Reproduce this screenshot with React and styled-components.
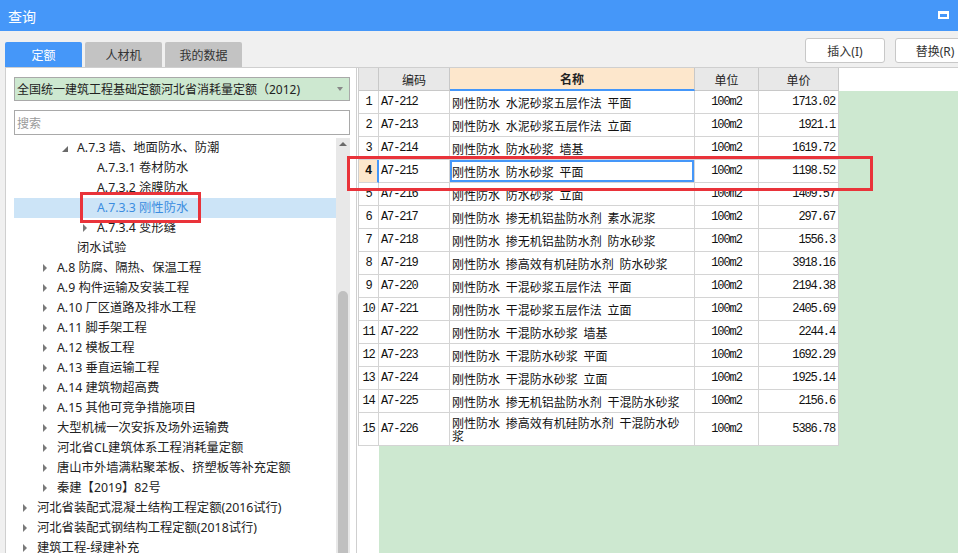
import React from 'react'
import styled, { createGlobalStyle, css } from 'styled-components'

const Global = createGlobalStyle`
  html, body { margin: 0; padding: 0; background: #f0f0f0; overflow: hidden; }
  * { box-sizing: border-box; }
`

const UI_FONT = `"Noto Sans", "Noto Sans CJK SC", sans-serif`
const CJK_FONT = `"Noto Sans CJK SC", sans-serif`
const BLUE = '#4597f9'
const GREEN = '#cde8d0'

const Window = styled.div`
  width: 958px;
  height: 553px;
  display: flex;
  flex-direction: column;
  position: relative;
  overflow: hidden;
  font-family: ${UI_FONT};
  color: #333;
`
const TitleBar = styled.div`
  height: 31px;
  flex: none;
  background: ${BLUE};
  display: flex;
  align-items: center;
  justify-content: space-between;
  padding: 0 8px 0 8px;
  color: #fff;
  font-family: ${CJK_FONT};
  font-size: 14px;
`
const MaxIcon = styled.span`
  width: 11px;
  height: 8px;
  border: 2px solid #fff;
  border-top-width: 3px;
  margin-right: 1px;
  margin-top: -1px;
`
const Toolbar = styled.div`
  height: 36px;
  flex: none;
  display: flex;
  justify-content: space-between;
  padding-left: 5px;
  overflow: hidden;
`
const Tabs = styled.div`
  display: flex;
  align-items: flex-end;
  gap: 3px;
`
const Tab = styled.div`
  width: 77px;
  height: 25px;
  border-radius: 2px 2px 0 0;
  display: flex;
  align-items: center;
  justify-content: center;
  font-family: ${CJK_FONT};
  font-size: 12px;
  background: ${p => (p.$active ? BLUE : '#c3c3c3')};
  color: ${p => (p.$active ? '#fff' : '#333')};
`
const Buttons = styled.div`
  display: flex;
  gap: 10px;
  padding-top: 7px;
  margin-right: -17px;
`
const Button = styled.div`
  width: 80px;
  height: 25px;
  border: 1px solid #c8c8c8;
  border-radius: 3px;
  background: #fff;
  display: flex;
  align-items: center;
  justify-content: center;
  font-size: 12px;
  color: #333;
`
const Content = styled.div`
  flex: 1;
  display: flex;
  min-height: 0;
  padding-left: 5px;
`
const LeftPanel = styled.div`
  width: 351px;
  flex: none;
  background: #fff;
  border-left: 1px solid #cfcfcf;
  border-top: 1px solid #cfcfcf;
  padding: 9px 5px 0 8px;
  display: flex;
  flex-direction: column;
  min-height: 0;
`
const Select = styled.div`
  height: 24px;
  width: 336px;
  background: ${GREEN};
  border: 1px solid #a9a9a9;
  display: flex;
  align-items: center;
  justify-content: space-between;
  padding: 0 6px 0 2px;
  font-size: 12px;
  color: #222;
`
const Caret = styled.span`
  width: 0;
  height: 0;
  border-left: 3.5px solid transparent;
  border-right: 3.5px solid transparent;
  border-top: 4px solid #888;
`
const Search = styled.div`
  height: 25px;
  width: 336px;
  margin-top: 9px;
  border: 1px solid #a9a9a9;
  display: flex;
  align-items: center;
  padding-left: 2px;
  font-family: ${CJK_FONT};
  font-size: 12px;
  color: #9a9a9a;
`
const TreeArea = styled.div`
  flex: 1;
  display: flex;
  margin-top: 3px;
  min-height: 0;
  width: 336px;
`
const TreeList = styled.div`
  width: 322px;
  flex: none;
`
const TreeRow = styled.div`
  height: 20px;
  display: flex;
  align-items: center;
  padding-left: ${p => 8 + p.$level * 20}px;
  font-size: 12.3px;
  line-height: 20px;
  white-space: nowrap;
  background: ${p => (p.$selected ? '#cce4f7' : 'transparent')};
  color: ${p => (p.$selected ? '#3b8de0' : '#222')};
`
const Arrow = styled.span`
  width: 15px;
  flex: none;
  display: flex;
  align-items: center;
  ${p => p.$kind === 'closed' && css`
    &::before {
      content: '';
      border-top: 4px solid transparent;
      border-bottom: 4px solid transparent;
      border-left: 4px solid #7a7a7a;
      margin-left: 1px;
    }
  `}
  ${p => p.$kind === 'open' && css`
    &::before {
      content: '';
      border-left: 6px solid transparent;
      border-bottom: 6px solid #6a6a6a;
      margin-top: 2px;
    }
  `}
`
const ScrollTrack = styled.div`
  width: 14px;
  flex: none;
  background: #e8e8e8;
  display: flex;
  flex-direction: column;
  align-items: center;
`
const UpArrow = styled.span`
  margin-top: 4px;
  border-left: 4px solid transparent;
  border-right: 4px solid transparent;
  border-bottom: 4px solid #6a6a6a;
`
const Thumb = styled.div`
  width: 10px;
  flex: 1;
  margin-top: 145px;
  background: #c0c0c0;
  border-radius: 5px 5px 0 0;
`

const TablePane = styled.div`
  flex: 1;
  border-left: 1px solid #cfcfcf;
  border-top: 1px solid #cfcfcf;
  padding-left: 1px;
  background:
    linear-gradient(to bottom, #fff 23px, transparent 23px),
    linear-gradient(to right, #fff 22px, ${GREEN} 22px);
`
const Grid = styled.div`
  display: grid;
  grid-template-columns: 20px 71px 245px 64px 80px;
  width: 481px;
  border-left: 1px solid #cfcfcf;
  background: #fff;
`
const Cell = styled.div`
  border-right: 1px solid #d4d4d4;
  border-bottom: 1px solid #d4d4d4;
  height: ${p => (p.$tall ? 33 : 23)}px;
  display: flex;
  align-items: center;
  font-size: 12px;
  overflow: hidden;
  white-space: nowrap;
  color: #111;
  justify-content: ${p => p.$align || 'flex-start'};
  padding: 0 ${p => (p.$align === 'flex-end' ? 3 : 0)}px 0 ${p => (p.$align ? 0 : 2)}px;
`
const HeadCell = styled(Cell)`
  height: 23px;
  justify-content: center;
  padding: 0;
  font-family: ${CJK_FONT};
  font-size: 12px;
  color: #222;
  background: ${p => (p.$active ? '#fde7cc' : '#e8e8e8')};
  font-weight: ${p => (p.$active ? 700 : 400)};
  border-right-color: #c8c8c8;
  border-bottom: ${p => (p.$active ? `2px solid ${BLUE}` : '1px solid #c8c8c8')};
`
const NumCell = styled(Cell)`
  justify-content: center;
  padding: 0;
  background: ${p => (p.$selected ? '#fde7cc' : '#fff')};
  border-right-color: ${p => (p.$selected ? BLUE : '#d4d4d4')};
  border-right-width: ${p => (p.$selected ? 2 : 1)}px;
  font-weight: ${p => (p.$selected ? 700 : 400)};
`
const NameCell = styled(Cell)`
  font-family: ${CJK_FONT};
  word-spacing: 3px;
  white-space: pre-line;
  line-height: 13px;
  ${p => p.$selected && css`box-shadow: inset 0 0 0 2px ${BLUE};`}
`
const Mono = styled.span`
  font-family: "Liberation Mono", "DejaVu Sans Mono", monospace;
  font-size: 12px;
  letter-spacing: -1.1px;
`

const Mark = styled.div`
  position: absolute;
  border: 3px solid #e9333a;
  pointer-events: none;
`

const tree = [
  { level: 2, arrow: 'open', text: 'A.7.3 墙、地面防水、防潮' },
  { level: 3, text: 'A.7.3.1 卷材防水' },
  { level: 3, text: 'A.7.3.2 涂膜防水' },
  { level: 3, text: 'A.7.3.3 刚性防水', selected: true },
  { level: 3, arrow: 'closed', text: 'A.7.3.4 变形缝' },
  { level: 2, text: '闭水试验' },
  { level: 1, arrow: 'closed', text: 'A.8 防腐、隔热、保温工程' },
  { level: 1, arrow: 'closed', text: 'A.9 构件运输及安装工程' },
  { level: 1, arrow: 'closed', text: 'A.10 厂区道路及排水工程' },
  { level: 1, arrow: 'closed', text: 'A.11 脚手架工程' },
  { level: 1, arrow: 'closed', text: 'A.12 模板工程' },
  { level: 1, arrow: 'closed', text: 'A.13 垂直运输工程' },
  { level: 1, arrow: 'closed', text: 'A.14 建筑物超高费' },
  { level: 1, arrow: 'closed', text: 'A.15 其他可竞争措施项目' },
  { level: 1, arrow: 'closed', text: '大型机械一次安拆及场外运输费' },
  { level: 1, arrow: 'closed', text: '河北省CL建筑体系工程消耗量定额' },
  { level: 1, arrow: 'closed', text: '唐山市外墙满粘聚苯板、挤塑板等补充定额' },
  { level: 1, arrow: 'closed', text: '秦建【2019】82号' },
  { level: 0, arrow: 'closed', text: '河北省装配式混凝土结构工程定额(2016试行)' },
  { level: 0, arrow: 'closed', text: '河北省装配式钢结构工程定额(2018试行)' },
  { level: 0, arrow: 'closed', text: '建筑工程-绿建补充' },
]

const rows = [
  ['A7-212', '刚性防水 水泥砂浆五层作法 平面', '1713.02'],
  ['A7-213', '刚性防水 水泥砂浆五层作法 立面', '1921.1'],
  ['A7-214', '刚性防水 防水砂浆 墙基', '1619.72'],
  ['A7-215', '刚性防水 防水砂浆 平面', '1198.52'],
  ['A7-216', '刚性防水 防水砂浆 立面', '1409.57'],
  ['A7-217', '刚性防水 掺无机铝盐防水剂 素水泥浆', '297.67'],
  ['A7-218', '刚性防水 掺无机铝盐防水剂 防水砂浆', '1556.3'],
  ['A7-219', '刚性防水 掺高效有机硅防水剂 防水砂浆', '3918.16'],
  ['A7-220', '刚性防水 干混砂浆五层作法 平面', '2194.38'],
  ['A7-221', '刚性防水 干混砂浆五层作法 立面', '2405.69'],
  ['A7-222', '刚性防水 干混防水砂浆 墙基', '2244.4'],
  ['A7-223', '刚性防水 干混防水砂浆 平面', '1692.29'],
  ['A7-224', '刚性防水 干混防水砂浆 立面', '1925.14'],
  ['A7-225', '刚性防水 掺无机铝盐防水剂 干混防水砂浆', '2156.6'],
  ['A7-226', '刚性防水 掺高效有机硅防水剂 干混防水砂\n浆', '5386.78'],
]

const App = () => {
  return (
    <Window>
      <Global />
      <TitleBar>
        <span>查询</span>
        <MaxIcon />
      </TitleBar>
      <Toolbar>
        <Tabs>
          <Tab $active>定额</Tab>
          <Tab>人材机</Tab>
          <Tab>我的数据</Tab>
        </Tabs>
        <Buttons>
          <Button>插入(I)</Button>
          <Button>替换(R)</Button>
        </Buttons>
      </Toolbar>
      <Content>
        <LeftPanel>
          <Select>
            <span>全国统一建筑工程基础定额河北省消耗量定额（2012)</span>
            <Caret />
          </Select>
          <Search>搜索</Search>
          <TreeArea>
            <TreeList>
              {tree.map((n, i) => (
                <TreeRow key={i} $level={n.level} $selected={n.selected}>
                  <Arrow $kind={n.arrow} />
                  <span>{n.text}</span>
                </TreeRow>
              ))}
            </TreeList>
            <ScrollTrack>
              <UpArrow />
              <Thumb />
            </ScrollTrack>
          </TreeArea>
        </LeftPanel>
        <TablePane>
          <Grid>
            <HeadCell />
            <HeadCell>编码</HeadCell>
            <HeadCell $active>名称</HeadCell>
            <HeadCell>单位</HeadCell>
            <HeadCell>单价</HeadCell>
            {rows.map(([code, name, price], i) => {
              const sel = i === 3
              const tall = i === 14
              return (
                <React.Fragment key={code}>
                  <NumCell $selected={sel} $tall={tall}><Mono>{i + 1}</Mono></NumCell>
                  <Cell $tall={tall}><Mono>{code}</Mono></Cell>
                  <NameCell $selected={sel} $tall={tall}>{name}</NameCell>
                  <Cell $align="center" $tall={tall}><Mono>100m2</Mono></Cell>
                  <Cell $align="flex-end" $tall={tall}><Mono>{price}</Mono></Cell>
                </React.Fragment>
              )
            })}
          </Grid>
        </TablePane>
      </Content>
      <Mark style={{ left: 80, top: 192, width: 121, height: 31 }} />
      <Mark style={{ left: 347, top: 156, width: 526, height: 35 }} />
    </Window>
  )
}

export default App
